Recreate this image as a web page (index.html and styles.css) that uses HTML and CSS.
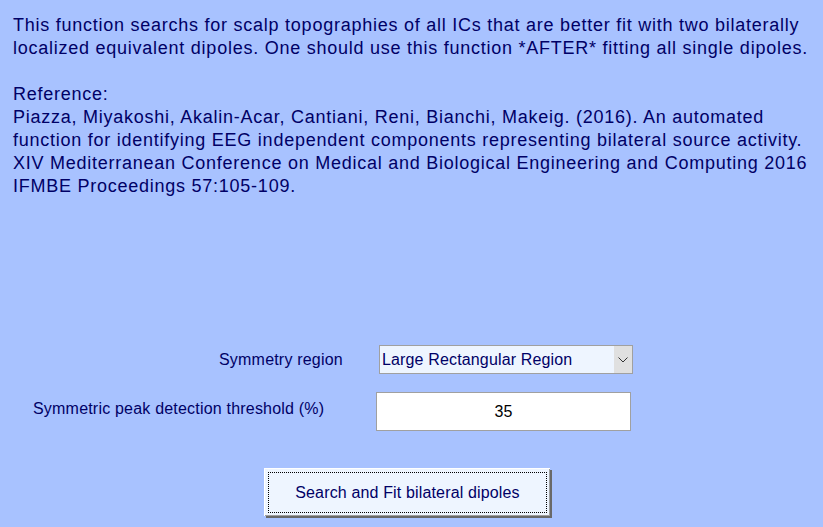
FILE: index.html
```html
<!DOCTYPE html>
<html>
<head>
<meta charset="utf-8">
<link rel="stylesheet" href="styles.css">
</head>
<body>
<div class="page">
  <div class="desc">
    <p>This function searchs for scalp topographies of all ICs that are better fit with two bilaterally<br>localized equivalent dipoles. One should use this function *AFTER* fitting all single dipoles.</p>
    <p>Reference:<br>Piazza, Miyakoshi, Akalin-Acar, Cantiani, Reni, Bianchi, Makeig. (2016). An automated<br>function for identifying EEG independent components representing bilateral source activity.<br>XIV Mediterranean Conference on Medical and Biological Engineering and Computing 2016<br>IFMBE Proceedings 57:105-109.</p>
  </div>
  <div class="form">
    <div class="row row1">
      <span class="label label1">Symmetry region</span>
      <div class="select">
        <span class="select-text">Large Rectangular Region</span>
        <span class="select-arrow"><svg width="10" height="6" viewBox="0 0 10 6"><path d="M0.5 0.5 L5 5 L9.5 0.5" fill="none" stroke="#333" stroke-width="1"/></svg></span>
      </div>
    </div>
    <div class="row row2">
      <span class="label label2">Symmetric peak detection threshold (%)</span>
      <div class="edit">35</div>
    </div>
    <div class="row row3">
      <button class="btn"><span class="btn-focus">Search and Fit bilateral dipoles</span></button>
    </div>
  </div>
</div>
</body>
</html>
```
FILE: styles.css
```css
html, body {
  margin: 0;
  padding: 0;
  background: #a8c2ff;
}
body {
  width: 823px;
  height: 527px;
  overflow: hidden;
  font-family: "Liberation Sans", Arial, sans-serif;
  color: #000066;
}
.desc {
  padding: 14px 0 0 13px;
  font-size: 18px;
  letter-spacing: 0.75px;
  line-height: 23px;
}
.desc p {
  margin: 0 0 23px 0;
}
.desc p:last-child {
  margin-bottom: 0;
}
.form {
  margin-top: 147px;
}
.row {
  display: flex;
  align-items: center;
}
.label {
  font-size: 16px;
  letter-spacing: 0.2px;
}
.row1 {
  height: 29px;
}
.label1 {
  margin-left: 219px;
  width: 160px;
}
.select {
  box-sizing: border-box;
  width: 254px;
  height: 29px;
  border: 1px solid #a0a0a0;
  background: #eef5ff;
  display: flex;
  align-items: center;
}
.select-text {
  flex: 1;
  padding-left: 2px;
  font-size: 16px;
  letter-spacing: 0.15px;
}
.select-arrow {
  width: 18px;
  height: 100%;
  background: #e0e0e0;
  display: flex;
  align-items: center;
  justify-content: center;
}
.row2 {
  margin-top: 18px;
  height: 39px;
}
.label2 {
  margin-left: 33px;
  width: 343px;
  padding-bottom: 5px;
}
.edit {
  box-sizing: border-box;
  width: 255px;
  height: 39px;
  border: 1px solid #a0a0a0;
  background: #ffffff;
  color: #000;
  font-size: 16px;
  display: flex;
  align-items: center;
  justify-content: center;
}
.row3 {
  margin-top: 37px;
  padding-left: 264px;
}
.btn {
  box-sizing: border-box;
  width: 286px;
  height: 48px;
  padding: 3px;
  margin: 0;
  background: #eef5ff;
  border: none;
  border-top: 1px solid #ffffff;
  border-left: 1px solid #ffffff;
  box-shadow: inset -1px -1px 0 #a0a0a0, 2px 2px 0 #696969;
  font-family: "Liberation Sans", Arial, sans-serif;
  font-size: 16px;
  letter-spacing: 0.15px;
  color: #000066;
  display: flex;
}
.btn-focus {
  flex: 1;
  border: 1px dotted #000;
  display: flex;
  align-items: center;
  justify-content: center;
}
```
